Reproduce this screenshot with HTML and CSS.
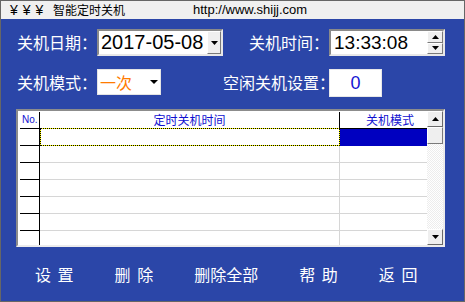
FILE: index.html
```html
<!DOCTYPE html>
<html lang="zh-CN">
<head>
<meta charset="utf-8">
<title>智能定时关机</title>
<link rel="stylesheet" href="styles.css">
</head>
<body>
<div class="window">
  <div class="titlebar">
    <span class="yen"><span>¥</span> <span>¥</span> <span>¥</span></span>
    <span class="appname">智能定时关机</span>
    <span class="url">http://www.shijj.com</span>
  </div>
  <div class="content">
    <div class="form">
      <div class="label">关机日期：</div>
      <div class="field date">
        <span class="val">2017-05-08</span>
        <span class="dropbtn"><svg width="7" height="4" viewBox="0 0 7 4"><polygon points="0,0 7,0 3.5,4" fill="#000"/></svg></span>
      </div>
      <div class="label right">关机时间：</div>
      <div class="field time">
        <span class="val">13:33:08</span>
        <span class="spin">
          <span class="spinbtn"><svg width="7" height="4" viewBox="0 0 7 4"><polygon points="0,4 7,4 3.5,0" fill="#000"/></svg></span>
          <span class="spinbtn"><svg width="7" height="4" viewBox="0 0 7 4"><polygon points="0,0 7,0 3.5,4" fill="#000"/></svg></span>
        </span>
      </div>
      <div class="label">关机模式：</div>
      <div class="combo-cell">
        <div class="combo">
          <span class="mode">一次</span>
          <svg width="8" height="4" viewBox="0 0 8 4"><polygon points="0,0 8,0 4,4" fill="#000"/></svg>
        </div>
      </div>
      <div class="label right">空闲关机设置：</div>
      <div class="idle-cell"><div class="idle">0</div></div>
    </div>

    <div class="table">
      <div class="grid">
        <div class="h h1">No.</div>
        <div class="h h2">定时关机时间</div>
        <div class="h h3">关机模式</div>

        <div class="c c1 first"></div>
        <div class="c c2 sel"></div>
        <div class="c c3 first selmode"></div>

        <div class="c c1"></div><div class="c c2"></div><div class="c c3"></div>
        <div class="c c1"></div><div class="c c2"></div><div class="c c3"></div>
        <div class="c c1"></div><div class="c c2"></div><div class="c c3"></div>
        <div class="c c1"></div><div class="c c2"></div><div class="c c3"></div>
        <div class="c c1"></div><div class="c c2"></div><div class="c c3"></div>
        <div class="c c1"></div><div class="c c2"></div><div class="c c3"></div>
      </div>
      <div class="scrollbar">
        <div class="sbtn"><svg width="7" height="4" viewBox="0 0 7 4"><polygon points="0,4 7,4 3.5,0" fill="#000"/></svg></div>
        <div class="thumb"></div>
        <div class="track"></div>
        <div class="sbtn"><svg width="7" height="4" viewBox="0 0 7 4"><polygon points="0,0 7,0 3.5,4" fill="#000"/></svg></div>
      </div>
    </div>

    <div class="buttons">
      <span class="btn">设 置</span>
      <span class="btn">删 除</span>
      <span class="btn">删除全部</span>
      <span class="btn">帮 助</span>
      <span class="btn">返 回</span>
    </div>
  </div>
</div>
</body>
</html>
```

FILE: styles.css
```css
html, body {
  margin: 0;
  padding: 0;
}
body {
  font-family: "Noto Sans CJK SC", "Liberation Sans", sans-serif;
}
.window {
  width: 465px;
  height: 302px;
  box-sizing: border-box;
  border: 1px solid #666;
  background: #2b46a8;
  display: flex;
  flex-direction: column;
  overflow: hidden;
}
.titlebar {
  height: 18px;
  flex: none;
  background: #f0f0f0;
  display: flex;
  align-items: center;
  padding-left: 9px;
  color: #000;
  font-size: 12px;
  line-height: 18px;
}
.yen {
  display: flex;
  gap: 5px;
  width: 31px;
  flex: none;
  font-family: "Liberation Sans", sans-serif;
  font-size: 14px;
}
.appname {
  margin-left: 12px;
  font-family: "Noto Sans CJK SC", sans-serif;
  font-size: 12px;
}
.url {
  margin-left: 68px;
  font-family: "Liberation Sans", sans-serif;
  font-size: 13px;
}
.content {
  flex: 1;
  display: flex;
  flex-direction: column;
  padding: 0 19px 0 15px;
}
.form {
  margin-top: 10px;
  margin-left: 1px;
  display: grid;
  grid-template-columns: 80px 126px 106px 116px;
  grid-template-rows: 27px 27px;
  row-gap: 13px;
}
.label {
  color: #fff;
  font-size: 16px;
  line-height: 27px;
  white-space: nowrap;
}
.label.right {
  text-align: right;
}
.field {
  box-sizing: border-box;
  background: #fff;
  border: 2px solid;
  border-color: #8a8a8a #e8e8e8 #e8e8e8 #8a8a8a;
  display: flex;
  align-items: stretch;
}
.field .val {
  flex: 1;
  font-family: "Liberation Sans", sans-serif;
  font-size: 20px;
  line-height: 23px;
  color: #000;
  padding-left: 2px;
}
.time .val {
  padding-left: 3px;
  font-size: 19px;
}
.dropbtn {
  width: 14px;
  box-sizing: border-box;
  background: #efefef;
  border: 1px solid;
  border-color: #fff #7a7a7a #7a7a7a #fff;
  display: flex;
  align-items: center;
  justify-content: center;
}
.spin {
  width: 16px;
  display: flex;
  flex-direction: column;
}
.spinbtn {
  flex: 1;
  box-sizing: border-box;
  background: #efefef;
  border: 1px solid;
  border-color: #fff #7a7a7a #7a7a7a #fff;
  display: flex;
  align-items: center;
  justify-content: center;
}
.combo-cell {
  display: flex;
}
.combo {
  width: 64px;
  height: 26px;
  box-sizing: border-box;
  background: #fff;
  border: 1px solid #e4e4e4;
  display: flex;
  align-items: center;
  padding-left: 2px;
}
.mode {
  color: #ff7b00;
  font-size: 16px;
  width: 50px;
}
.idle-cell {
  display: flex;
}
.idle {
  width: 53px;
  height: 28px;
  box-sizing: border-box;
  background: #fff;
  border: 1px solid #e8e8e8;
  color: #1414d2;
  font-family: "Liberation Sans", sans-serif;
  font-size: 18px;
  line-height: 26px;
  text-align: center;
}
.table {
  margin-top: 13px;
  width: 429px;
  height: 138px;
  box-sizing: border-box;
  border: 2px solid;
  border-color: #8c8c8c #ececec #ececec #8c8c8c;
  background: #fff;
  display: flex;
  padding: 0 0 0 2px;
  overflow: hidden;
}
.grid {
  width: 407px;
  padding-top: 1px;
  display: grid;
  grid-template-columns: 20px 300px 87px;
  grid-template-rows: 16px 18px repeat(5, 17px) 17px;
  align-content: start;
  overflow: hidden;
}
.h, .c {
  box-sizing: border-box;
}
.h {
  color: #1010d0;
  font-size: 12px;
  line-height: 16px;
  white-space: nowrap;
}
.h1 {
  border-right: 1px solid #000;
  font-family: "Liberation Sans", sans-serif;
  font-size: 10px;
  padding-left: 2px;
}
.h2 {
  border-right: 1px solid #000;
  text-align: center;
}
.h3 {
  padding-left: 26px;
}
.c1 {
  border-right: 1px solid #000;
  border-bottom: 1px solid #000;
}
.c2 {
  border-right: 1px solid #d6d6d6;
  border-bottom: 1px solid #d6d6d6;
}
.c3 {
  border-bottom: 1px solid #d6d6d6;
}
.first {
  border-top: 1px solid #000;
}
.c2.sel {
  border: 1px dotted #000;
  background: linear-gradient(#fff, #fff) padding-box, linear-gradient(#ffff00, #ffff00) border-box;
}
.c3.selmode {
  background: #0000c0;
  border-bottom-color: #0000c0;
}
.scrollbar {
  width: 16px;
  display: flex;
  flex-direction: column;
}
.sbtn {
  height: 16px;
  flex: none;
  box-sizing: border-box;
  background: #efefef;
  border: 1px solid;
  border-color: #fff #6a6a6a #6a6a6a #fff;
  display: flex;
  align-items: center;
  justify-content: center;
}
.thumb {
  height: 17px;
  flex: none;
  box-sizing: border-box;
  background: #efefef;
  border: 1px solid;
  border-color: #fff #7a7a7a #7a7a7a #fff;
}
.track {
  flex: 1;
  background-image: repeating-conic-gradient(#ededed 0% 25%, #fff 0% 50%);
  background-size: 2px 2px;
}
.buttons {
  flex: 1;
  display: flex;
  align-items: center;
  padding-left: 19px;
  gap: 41px;
}
.btn {
  color: #fff;
  font-size: 16px;
  word-spacing: 3px;
  white-space: nowrap;
}
```
